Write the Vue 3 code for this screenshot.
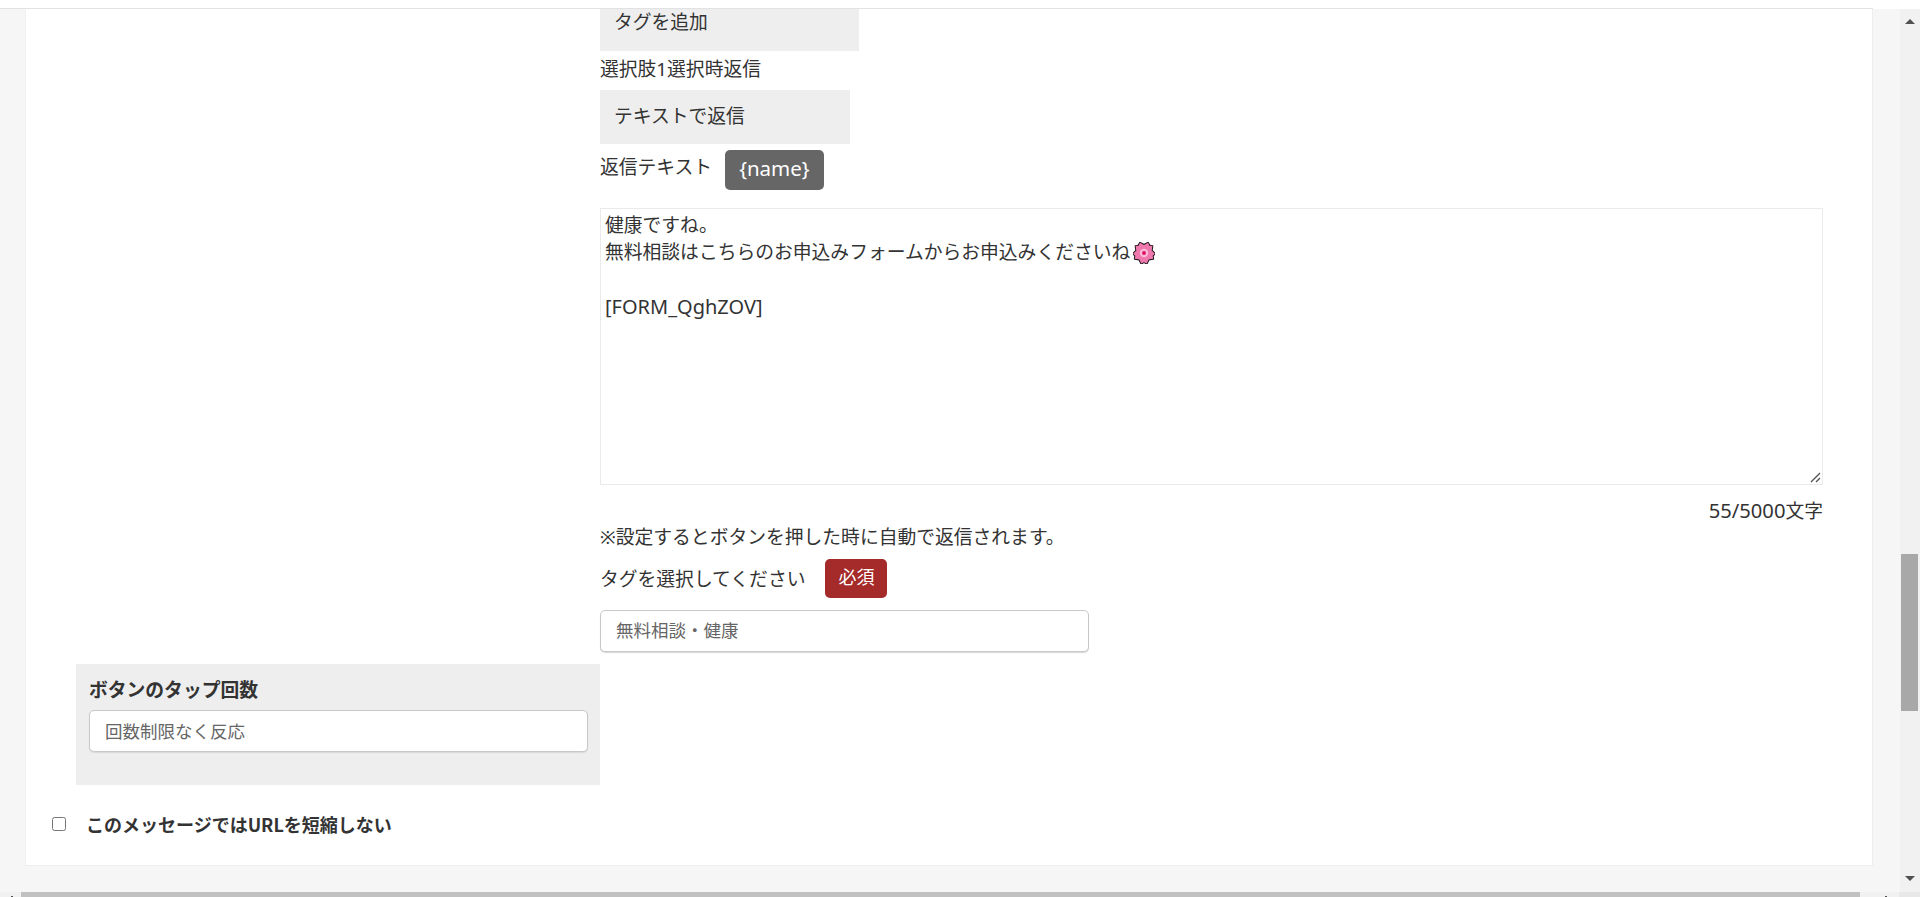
<script setup>
const messageLines = ['健康ですね。', '無料相談はこちらのお申込みフォームからお申込みくださいね', '', '[FORM_QghZOV]']
const petals = [0, 72, 144, 216, 288]
const petal = 'M12 12 C5.6 10.4 4.8 5 7.6 .9 L12 3.2 L16.4 .9 C19.2 5 18.4 10.4 12 12 Z'
</script>

<template>
  <div class="page">
    <div class="topbar"><div class="topline"></div></div>
    <div class="below">
      <div class="viewport">
        <main class="content">
          <section class="card">
            <div class="settings">
              <div class="col-left"></div>
              <div class="col-right">
                <div class="gray-box first">タグを追加</div>
                <div class="label choice">選択肢1選択時返信</div>
                <div class="gray-box second">テキストで返信</div>
                <div class="text-head">
                  <span>返信テキスト</span>
                  <span class="chip">{name}</span>
                </div>
                <div class="message">
                  <div v-for="(line, i) in messageLines" :key="i" class="message-line" :class="{ latin: i === 3 }">
                    {{ line }}<svg v-if="i === 1" class="blossom" viewBox="0 0 24 24" aria-hidden="true">
                      <path v-for="a in petals" :key="a" :d="petal" :transform="`rotate(${a} 12 12)`" fill="#111" stroke="#111" stroke-width="2" stroke-linejoin="round" />
                      <path v-for="a in petals" :key="'p' + a" :d="petal" :transform="`rotate(${a} 12 12)`" fill="#ee78ae" />
                      <circle cx="12" cy="12" r="4.6" fill="#fbb9d6" />
                      <circle cx="12" cy="12" r="2.1" fill="#dc1268" />
                    </svg>
                  </div>
                  <svg class="grip" viewBox="0 0 12 12" aria-hidden="true">
                    <path d="M2 11 L11 2 M7 11 L11 7" stroke="#555" stroke-width="1.4" fill="none" />
                  </svg>
                </div>
                <div class="count"><span class="digits">55/5000</span>文字</div>
                <div class="note">※設定するとボタンを押した時に自動で返信されます。</div>
                <div class="tag-head">
                  <span>タグを選択してください</span>
                  <span class="chip required">必須</span>
                </div>
                <div class="select tag-select">無料相談・健康</div>
              </div>
              <div class="tap-box">
                <div class="tap-title">ボタンのタップ回数</div>
                <div class="select tap-select">回数制限なく反応</div>
              </div>
            </div>
            <label class="shorten">
              <span class="checkbox"></span>
              <span>このメッセージではURLを短縮しない</span>
            </label>
          </section>
        </main>
        <div class="hscroll">
          <div class="hbtn left"><span class="tip"></span></div>
          <div class="hthumb"></div>
          <div class="hbtn right"><span class="tip"></span></div>
        </div>
      </div>
      <aside class="vscroll">
        <div class="vtrack">
          <span class="arrow up"></span>
          <div class="vthumb"></div>
          <span class="arrow down"></span>
        </div>
        <div class="corner"></div>
      </aside>
    </div>
  </div>
</template>

<style>
html, body { margin: 0; padding: 0; overflow: hidden; background: #f6f6f6; }
</style>

<style scoped>
.page {
  width: 1920px;
  height: 897px;
  display: flex;
  flex-direction: column;
  overflow: hidden;
  background: #f6f6f6;
  color: #333;
  font-family: "Noto Sans", "Noto Sans CJK JP", sans-serif;
  font-size: 18.8px;
}
.topbar {
  height: 9px;
  background: #fff;
  flex: none;
  display: flex;
  align-items: flex-end;
}
.topline {
  width: 1873px;
  height: 1px;
  background: #e2e2e2;
}
.below {
  flex: 1;
  min-height: 0;
  display: flex;
}
.viewport {
  width: 1899px;
  display: flex;
  flex-direction: column;
}
.content {
  flex: 1;
  padding: 0 26px 0 25px;
  min-height: 0;
}
.card {
  height: 857px;
  box-sizing: border-box;
  background: #fff;
  border: 1px solid #eee;
  border-top: 0;
  border-left-color: #f1f1f1;
}
.settings {
  display: grid;
  grid-template-columns: 50px 524px 1223px;
  grid-template-rows: auto auto;
}
.col-left { grid-column: 1 / 3; }
.col-right {
  grid-column: 3;
  display: flex;
  flex-direction: column;
  align-items: flex-start;
}
.gray-box {
  background: #eee;
  box-sizing: border-box;
  padding: 0 14px;
}
.gray-box.first {
  width: 259px;
  height: 42px;
  line-height: 26px;
}
.gray-box.second {
  width: 250px;
  height: 54px;
  line-height: 52px;
}
.label.choice {
  height: 39px;
  line-height: 36px;
}
.text-head, .tag-head {
  display: flex;
  align-items: center;
}
.text-head { margin-top: 6px; gap: 13px; line-height: 35px; }
.text-head > span:first-child { align-self: flex-start; }
.chip {
  background: #666;
  color: #fff;
  border-radius: 5px;
  height: 40px;
  line-height: 37px;
  padding: 0 14px;
  font-size: 20.5px;
}
.message {
  margin-top: 18px;
  width: 100%;
  height: 277px;
  box-sizing: border-box;
  border: 1px solid #eaeaea;
  padding: 3px 4px;
  position: relative;
  line-height: 27.4px;
}
.message-line { min-height: 27.4px; white-space: pre; }
.message-line.latin { font-size: 20px; line-height: 25.4px; }
.blossom {
  width: 22px;
  height: 22px;
  margin-left: 3px;
  vertical-align: -5px;
}
.grip {
  position: absolute;
  right: 1px;
  bottom: 1px;
  width: 12px;
  height: 12px;
}
.count {
  width: 100%;
  text-align: right;
  height: 39px;
  line-height: 50px;
}
.digits { font-size: 20.2px; }
.note {
  height: 27px;
  line-height: 27px;
}
.tag-head {
  gap: 20px;
  margin-top: 8px;
  line-height: 32px;
}
.chip.required {
  background: #a52a2a;
  height: 39px;
  line-height: 36px;
  font-size: 18px;
  padding: 0 13px;
}
.select {
  box-sizing: border-box;
  background: #fff;
  border: 1px solid #c8c8c8;
  box-shadow: 0 1px 1px #d8d8d8;
  border-radius: 5px;
  height: 42px;
  line-height: 38px;
  padding: 0 15px;
  color: #666;
  font-size: 17.5px;
}
.tag-select {
  width: 489px;
  margin-top: 12px;
  margin-bottom: 12px;
}
.tap-select { line-height: 40px; }
.tap-box {
  grid-column: 2;
  grid-row: 2;
  background: #eee;
  height: 121px;
  box-sizing: border-box;
  padding: 10px 12px 0 13px;
}
.tap-title {
  font-weight: 700;
  height: 36px;
  line-height: 32px;
}
.shorten {
  display: flex;
  align-items: center;
  padding-left: 26px;
  margin-top: 29px;
  font-weight: 700;
  font-size: 18px;
  gap: 20px;
  line-height: 20px;
  font-family: "Noto Sans CJK JP", sans-serif;
}
.checkbox {
  width: 14px;
  height: 14px;
  box-sizing: border-box;
  border: 1px solid #767676;
  border-radius: 2.5px;
  background: #fff;
}
.hscroll {
  height: 5px;
  flex: none;
  background: #f1f1f1;
  display: flex;
}
.hbtn {
  position: relative;
  background: #f1f1f1;
}
.hbtn.left { width: 21px; }
.hbtn.right { flex: 1; }
.tip {
  position: absolute;
  top: 4px;
  width: 2px;
  height: 1px;
  background: #505050;
}
.hbtn.left .tip { left: 11px; }
.hbtn.right .tip { right: 12px; }
.hthumb {
  width: 1839px;
  height: 100%;
  background: #c1c1c1;
}
.vscroll {
  flex: 1;
  display: flex;
  flex-direction: column;
  background: #f6f6f6;
}
.vtrack {
  flex: 1;
  margin-left: 1px;
  background: #f1f1f1;
  position: relative;
}
.corner {
  height: 5px;
  flex: none;
  background: #e8e8e8;
}
.vthumb {
  position: absolute;
  left: 1px;
  top: 545px;
  width: 17px;
  height: 157px;
  background: #a8a8a8;
}
.arrow {
  position: absolute;
  left: 5px;
  width: 0;
  height: 0;
  border-left: 5px solid transparent;
  border-right: 5px solid transparent;
}
.arrow.up {
  top: 10px;
  border-bottom: 5px solid #505050;
}
.arrow.down {
  top: 867px;
  border-top: 5px solid #505050;
}
</style>
